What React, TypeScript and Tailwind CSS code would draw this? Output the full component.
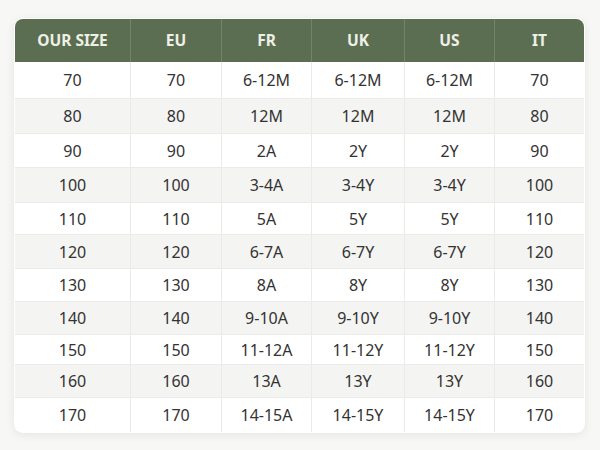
const headers = ['OUR SIZE', 'EU', 'FR', 'UK', 'US', 'IT'];

const rows = [
  { h: 'h-[36px]', cells: ['70', '70', '6-12M', '6-12M', '6-12M', '70'] },
  { h: 'h-[35px]', cells: ['80', '80', '12M', '12M', '12M', '80'] },
  { h: 'h-[34px]', cells: ['90', '90', '2A', '2Y', '2Y', '90'] },
  { h: 'h-[35px]', cells: ['100', '100', '3-4A', '3-4Y', '3-4Y', '100'] },
  { h: 'h-[32px]', cells: ['110', '110', '5A', '5Y', '5Y', '110'] },
  { h: 'h-[34px]', cells: ['120', '120', '6-7A', '6-7Y', '6-7Y', '120'] },
  { h: 'h-[33px]', cells: ['130', '130', '8A', '8Y', '8Y', '130'] },
  { h: 'h-[33px]', cells: ['140', '140', '9-10A', '9-10Y', '9-10Y', '140'] },
  { h: 'h-[30px]', cells: ['150', '150', '11-12A', '11-12Y', '11-12Y', '150'] },
  { h: 'h-[33px]', cells: ['160', '160', '13A', '13Y', '13Y', '160'] },
  { h: 'h-[35px]', cells: ['170', '170', '14-15A', '14-15Y', '14-15Y', '170'] },
];

const cols = 'grid grid-cols-[115px_91px_90px_93px_90px_90px]';

export default function App() {
  return (
    <div className="w-[600px] h-[450px] bg-[#f7f7f6] pt-[18px] pl-[14px] font-['Noto_Sans','Open_Sans',sans-serif]">
      <div className="w-[571px] bg-white rounded-[9px] p-px shadow-[0_2px_10px_rgba(0,0,0,0.08)]">
        <div className="rounded-t-[8px] rounded-b-[6px] overflow-hidden">
          {/* header */}
          <div className={`${cols} h-[43px] bg-[#5b6e52]`}>
            {headers.map((h, i) => (
              <div
                key={h}
                className={`flex items-center justify-center text-[15.5px] font-bold text-[#eef0e6] ${i > 0 ? 'border-l border-[#71836a]' : ''}`}
              >
                {h}
              </div>
            ))}
          </div>

          {/* body */}
          {rows.map((row, r) => (
            <div
              key={r}
              className={`${cols} ${row.h} ${r % 2 === 1 ? 'bg-[#f4f4f2]' : 'bg-white'} ${r > 0 ? 'border-t border-[#ebebe9]' : ''}`}
            >
              {row.cells.map((c, i) => (
                <div
                  key={i}
                  className={`flex items-center justify-center text-[16px] text-[#333333] ${i > 0 ? 'border-l border-[#ebebe9]' : ''}`}
                >
                  {c}
                </div>
              ))}
            </div>
          ))}
        </div>
      </div>
    </div>
  );
}
